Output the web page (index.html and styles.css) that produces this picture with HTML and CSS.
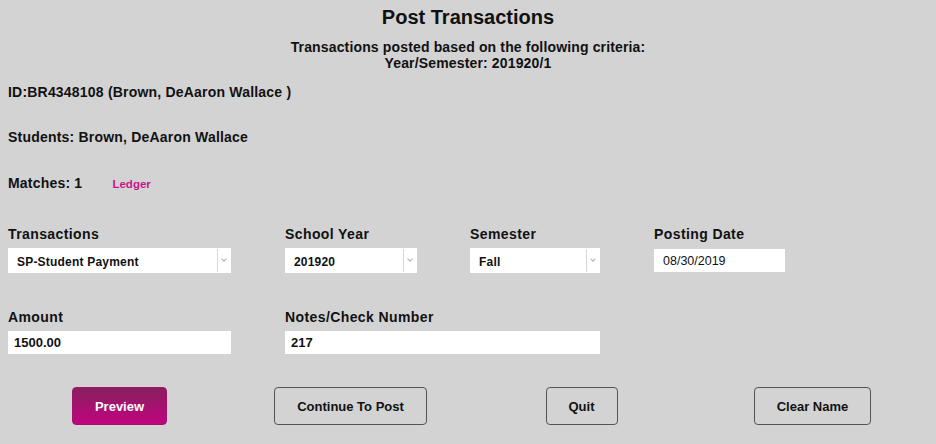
FILE: index.html
```html
<!DOCTYPE html>
<html lang="en">
<head>
  <meta charset="UTF-8">
  <title>Post Transactions</title>
  <link rel="stylesheet" href="styles.css">
</head>
<body>
  <h1 class="title">Post Transactions</h1>
  <div class="criteria">
    <p>Transactions posted based on the following criteria:</p>
    <p>Year/Semester: 201920/1</p>
  </div>

  <p class="info id-line">ID:BR4348108 (Brown, DeAaron Wallace )</p>
  <p class="info students">Students: Brown, DeAaron Wallace</p>
  <p class="info matches">Matches: 1 <a href="#" class="ledger">Ledger</a></p>

  <div class="fields">
    <div class="field">
      <label>Transactions</label>
      <div class="select w223"><span>SP-Student Payment</span><i class="arrow"></i></div>
    </div>
    <div class="field">
      <label>School Year</label>
      <div class="select w132"><span>201920</span><i class="arrow"></i></div>
    </div>
    <div class="field">
      <label>Semester</label>
      <div class="select w130"><span>Fall</span><i class="arrow"></i></div>
    </div>
    <div class="field">
      <label>Posting Date</label>
      <input type="text" class="date" value="08/30/2019">
    </div>

    <div class="field row2">
      <label>Amount</label>
      <input type="text" class="text w223" value="1500.00">
    </div>
    <div class="field row2 span3">
      <label>Notes/Check Number</label>
      <input type="text" class="text w315" value="217">
    </div>
  </div>

  <div class="buttons">
    <button class="btn primary">Preview</button>
    <button class="btn">Continue To Post</button>
    <button class="btn">Quit</button>
    <button class="btn">Clear Name</button>
  </div>
</body>
</html>
```

FILE: styles.css
```css
body {
  margin: 0;
  padding: 0 8px;
  background-color: #d3d3d3;
  color: #111;
  font-family: "Liberation Sans", Arial, sans-serif;
  font-weight: bold;
}
p {
  margin: 0;
}
.title {
  margin: 5px 0 0;
  font-size: 20px;
  line-height: 24px;
  text-align: center;
}
.criteria {
  margin-top: 10px;
  font-size: 14px;
  line-height: 16px;
  letter-spacing: 0.15px;
  text-align: center;
}
.info {
  font-size: 14px;
  line-height: 16px;
  letter-spacing: 0.2px;
}
.id-line {
  margin-top: 13px;
}
.students {
  margin-top: 29px;
}
.matches {
  margin-top: 30px;
}
.ledger {
  margin-left: 26px;
  color: #c8168c;
  font-size: 11.5px;
  letter-spacing: 0;
  text-decoration: none;
}
.fields {
  display: grid;
  grid-template-columns: 277px 185px 184px auto;
  margin-top: 34px;
}
.field label {
  display: block;
  font-size: 14px;
  line-height: 16px;
  letter-spacing: 0.4px;
  margin-bottom: 6px;
}
.row2 {
  margin-top: 36px;
}
.span3 {
  grid-column: span 3;
}
.select {
  display: flex;
  height: 25px;
  background: #fff;
  font-size: 12px;
  letter-spacing: 0.2px;
  align-items: center;
}
.select span {
  flex: 1;
  padding-left: 9px;
  padding-top: 3px;
}
.select .arrow {
  width: 13px;
  height: 23px;
  border-left: 1px solid #d8d8d8;
  position: relative;
}
.select .arrow::after {
  content: "";
  position: absolute;
  left: 4px;
  top: 8px;
  width: 3px;
  height: 3px;
  border-right: 1px solid #b0b0b0;
  border-bottom: 1px solid #b0b0b0;
  transform: rotate(45deg);
}
.w223 { width: 223px; }
.w132 { width: 132px; }
.w130 { width: 130px; }
.w315 { width: 315px; }
input {
  box-sizing: border-box;
  height: 23px;
  margin: 0;
  border: none;
  padding: 0 6px;
  background: #fff;
  color: #111;
  font-family: "Liberation Sans", Arial, sans-serif;
  font-size: 13px;
  font-weight: bold;
  outline: none;
}
.date {
  width: 131px;
  padding-left: 9px;
  font-size: 12.5px;
  font-weight: normal;
  margin-top: 1px;
}
.buttons {
  display: grid;
  grid-template-columns: repeat(4, 231px);
  justify-items: center;
  margin: 33px 0 0 -4px;
}
.btn {
  height: 38px;
  padding: 0 22px;
  border: 1px solid #555;
  border-radius: 4px;
  background: #d3d3d3;
  color: #111;
  font-family: "Liberation Sans", Arial, sans-serif;
  font-size: 13px;
  font-weight: bold;
  cursor: pointer;
}
.btn.primary {
  border-color: #a0126e;
  background: linear-gradient(#891f5e, #c0047f);
  color: #fff;
}
```
